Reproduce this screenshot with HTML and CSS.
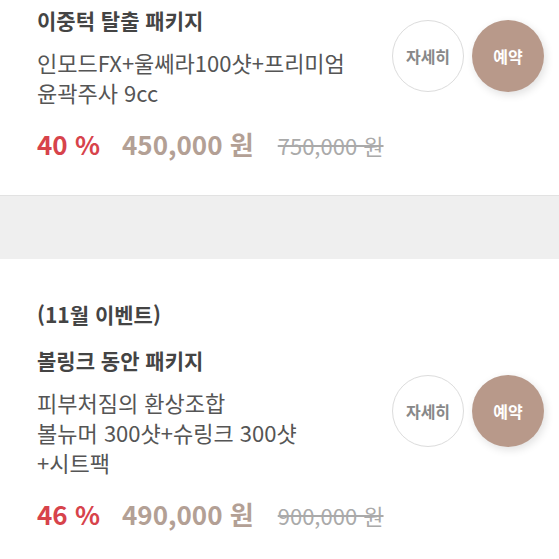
FILE: index.html
```html
<!DOCTYPE html>
<html lang="ko">
<head>
  <meta charset="UTF-8" />
  <meta name="viewport" content="width=device-width, initial-scale=1" />
  <title>이벤트 패키지</title>
  <link rel="stylesheet" href="styles.css">
</head>
<body>

  <div class="item item-first">
    <div class="item-row">
      <div class="item-info">
        <h2 class="item-title">이중턱 탈출 패키지</h2>
        <p class="item-desc">인모드FX+울쎄라100샷+프리미엄<br>윤곽주사 9cc</p>
      </div>
      <div class="item-buttons">
        <button class="btn-detail">자세히</button>
        <button class="btn-book">예약</button>
      </div>
    </div>
    <div class="price">
      <span class="price-rate">40 %</span>
      <span class="price-sale">450,000 원</span>
      <span class="price-orig">750,000 원</span>
    </div>
  </div>

  <div class="divider"></div>

  <div class="item">
    <div class="item-tag">(11월 이벤트)</div>
    <div class="item-row">
      <div class="item-info">
        <h2 class="item-title">볼링크 동안 패키지</h2>
        <p class="item-desc">피부처짐의 환상조합<br>볼뉴머 300샷+슈링크 300샷<br>+시트팩</p>
      </div>
      <div class="item-buttons">
        <button class="btn-detail">자세히</button>
        <button class="btn-book">예약</button>
      </div>
    </div>
    <div class="price">
      <span class="price-rate">46 %</span>
      <span class="price-sale">490,000 원</span>
      <span class="price-orig">900,000 원</span>
    </div>
  </div>

</body>
</html>
```

FILE: styles.css
```css
body {
  margin: 0;
  background: #fff;
  font-family: "Noto Sans CJK KR", "Noto Sans", sans-serif;
  color: #444;
}
.item {
  padding: 40px 15px 32px 37px;
  border-bottom: 1px solid #e2e2e2;
}
.item-first {
  padding-top: 5px;
}
.item-tag {
  font-size: 21px;
  font-weight: bold;
  line-height: 30px;
  color: #444;
  margin-bottom: 16px;
}
.item-row {
  display: flex;
  align-items: center;
  justify-content: space-between;
}
.item-title {
  margin: 0 0 12px;
  font-size: 21px;
  font-weight: bold;
  line-height: 30px;
  color: #444;
}
.item-desc {
  margin: 0;
  font-size: 22px;
  line-height: 30px;
  color: #555;
}
.item-buttons {
  display: flex;
  gap: 8px;
}
.item-buttons button {
  width: 72px;
  height: 72px;
  border-radius: 50%;
  font-family: inherit;
  font-size: 16px;
  font-weight: bold;
  padding: 0;
  cursor: pointer;
}
.btn-detail {
  background: #fff;
  border: 1px solid #dcdcdc;
  color: #888;
}
.btn-book {
  background: #b8998a;
  border: none;
  color: #fff;
  box-shadow: 2px 3px 8px rgba(0,0,0,0.12);
}
.price {
  margin-top: 19px;
  display: flex;
  align-items: baseline;
  line-height: 36px;
}
.price-rate {
  font-size: 26px;
  font-weight: bold;
  color: #d7434b;
  margin-right: 22px;
}
.price-sale {
  font-size: 26px;
  font-weight: bold;
  color: #b3a095;
  margin-right: 24px;
}
.price-orig {
  font-size: 22px;
  color: #aaa;
  text-decoration: line-through;
}
.divider {
  height: 63px;
  background: #efefef;
}
```
